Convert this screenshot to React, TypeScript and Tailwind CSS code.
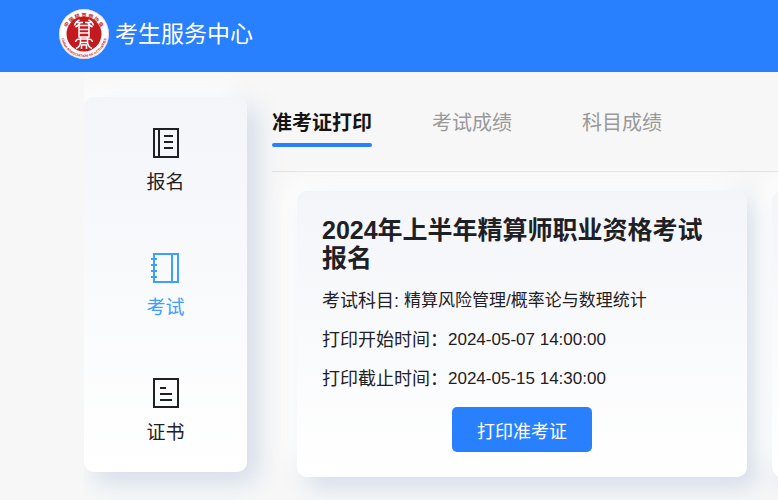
import React, { useState } from 'react';

const navItems = [
  { key: 'signup', label: '报名' },
  { key: 'exam', label: '考试' },
  { key: 'certificate', label: '证书' },
];

const tabs = ['准考证打印', '考试成绩', '科目成绩'];

const cardStyle =
  'rounded-[10px] bg-linear-to-b from-[#f3f5f9] to-white shadow-[10px_10px_25px_0_rgba(55,99,170,0.18),-10px_-10px_25px_0_#ffffff]';

const Logo: React.FC = () => (
  <svg viewBox="0 0 100 100" className="size-[50px]" aria-hidden="true">
    <defs>
      <path id="ringTop" d="M 12 54 A 38 38 0 1 1 88 54" />
      <path id="ringBottom" d="M 4 50 A 46 46 0 0 0 96 50" />
    </defs>
    <circle cx="50" cy="50" r="50" fill="#fff" />
    <circle cx="50" cy="50" r="49" fill="none" stroke="#e3b3b6" strokeWidth="1" />
    <circle cx="50" cy="50" r="35" fill="#c3191f" />
    <text fill="#c3191f" fontSize="10" fontWeight="700" fontFamily="Noto Sans CJK SC, sans-serif">
      <textPath href="#ringTop" startOffset="50%" textAnchor="middle">中 国 精 算 师 协 会</textPath>
    </text>
    <text fill="#c3191f" fontSize="7" fontWeight="700" fontFamily="Liberation Sans, sans-serif">
      <textPath href="#ringBottom" startOffset="50%" textAnchor="middle">CHINA ASSOCIATION OF ACTUARIES</textPath>
    </text>
    {/* 中间的印章图案 */}
    <g fill="none" stroke="#fff" strokeWidth="3">
      <path d="M31 33 Q33 25 41 22 M35 27 H48 M42 27 Q41 32 33 36" />
      <path d="M69 33 Q67 25 59 22 M65 27 H52 M58 27 Q59 32 67 36" />
      <path d="M40 33 H60 V56 H40 Z M40 41 H60 M40 48 H60" />
      <path d="M33 66 Q34 60 42 60 H58 Q66 60 67 66 M43 56 V66 Q43 75 34 79 M57 56 V66 Q57 75 66 79" />
      <path d="M43 67 H57 M45 80 V72 H55 V80" />
    </g>
  </svg>
);

const NavIcon: React.FC<{ name: string }> = ({ name }) => (
  <svg
    viewBox="0 0 30 32"
    className="h-8 w-[30px]"
    fill="none"
    stroke="currentColor"
    strokeWidth="2"
    aria-hidden="true"
  >
    <path d="M3 2H27V30H3Z" />
    {name === 'signup' && <path d="M8 2V30M13 9H22M13 15H22M13 21H22" />}
    {name === 'exam' && <path d="M21 2V30M0 7H6M0 13H6M0 19H6M0 25H6" />}
    {name === 'certificate' && <path d="M9 11H15M9 17H21M9 23H21" />}
  </svg>
);

const InfoRow: React.FC<{ label: string; value: string }> = ({ label, value }) => (
  <div className="flex h-[39px] items-center whitespace-pre leading-6">
    <dt className="text-[18px]">{label}</dt>
    <dd className="text-[17px]">{value}</dd>
  </div>
);

const App: React.FC = () => {
  const [activeNav, setActiveNav] = useState('exam');
  const [activeTab, setActiveTab] = useState(tabs[0]);

  return (
    <div className="min-h-screen overflow-x-hidden bg-[#f7f7f7] font-['Liberation_Sans','Noto_Sans_CJK_SC',sans-serif] text-[#1f2023]">
      <header className="flex h-[72px] items-center gap-[6px] bg-[#2980ff] pb-1 pl-[59px] text-white">
        <Logo />
        <h1 className="text-[23px] leading-8">考生服务中心</h1>
      </header>

      <div className="ml-[84px] flex items-start gap-[25px] overflow-hidden pb-6 pt-[25px]">
        <nav className={`w-[163px] shrink-0 ${cardStyle}`}>
          {navItems.map((item) => (
            <button
              key={item.key}
              type="button"
              onClick={() => setActiveNav(item.key)}
              className={`flex h-[125px] w-full flex-col items-center justify-center gap-2 pt-[6px] text-[19px] leading-8 ${
                activeNav === item.key ? 'text-[#409eff]' : 'text-[#1f2023]'
              }`}
            >
              <NavIcon name={item.key} />
              <span>{item.label}</span>
            </button>
          ))}
        </nav>

        <main className="min-w-0 flex-1">
          <div className="flex h-[75px] gap-[50px] border-b border-[#dcdfe6]">
            {tabs.map((tab) => (
              <button
                key={tab}
                type="button"
                onClick={() => setActiveTab(tab)}
                className={`flex h-[50px] w-[100px] shrink-0 flex-col items-center justify-between text-[20px] leading-[52px] ${
                  activeTab === tab ? 'font-bold text-[#141414]' : 'text-[#999999]'
                }`}
              >
                <span className="h-[46px]">{tab}</span>
                {activeTab === tab && <span className="h-1 w-full rounded-sm bg-[#2980ff]" />}
              </button>
            ))}
          </div>

          <div className="flex gap-[25px] pl-[25px] pt-[19px]">
            <section className={`w-[450px] shrink-0 p-[25px] ${cardStyle}`}>
              <h2 className="mb-[9px] text-[25px] font-bold leading-7">2024年上半年精算师职业资格考试报名</h2>
              <dl>
                <InfoRow label="考试科目: " value="精算风险管理/概率论与数理统计" />
                <InfoRow label="打印开始时间：" value="2024-05-07 14:00:00" />
                <InfoRow label="打印截止时间：" value="2024-05-15 14:30:00" />
              </dl>
              <button
                type="button"
                className="mx-auto mt-[9px] block h-[45px] w-[140px] rounded-[5px] bg-[#2980ff] pt-1 text-[18px] leading-6 text-white"
              >
                打印准考证
              </button>
            </section>
            <section className={`w-[450px] shrink-0 ${cardStyle}`} />
          </div>
        </main>
      </div>
    </div>
  );
};

export default App;
